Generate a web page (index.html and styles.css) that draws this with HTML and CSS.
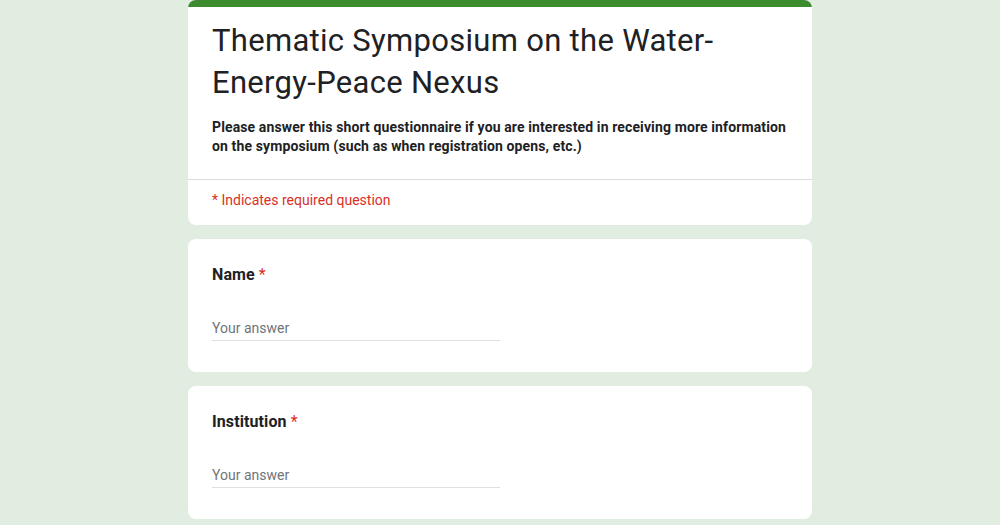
FILE: index.html
```html
<!DOCTYPE html>
<html lang="en">
<head>
<meta charset="utf-8">
<title>Thematic Symposium on the Water-Energy-Peace Nexus</title>
<link rel="stylesheet" href="styles.css">
</head>
<body>
<main class="form">
  <section class="card header-card">
    <div class="accent-bar"></div>
    <div class="header-body">
      <h1 class="form-title">Thematic Symposium on the Water-Energy-Peace Nexus</h1>
      <p class="form-desc">Please answer this short questionnaire if you are interested in receiving more information on the symposium (such as when registration opens, etc.)</p>
    </div>
    <div class="required-note">* Indicates required question</div>
  </section>

  <section class="card question">
    <div class="q-title">Name <span class="req">*</span></div>
    <div class="answer">Your answer</div>
  </section>

  <section class="card question">
    <div class="q-title">Institution <span class="req">*</span></div>
    <div class="answer">Your answer</div>
  </section>
</main>
</body>
</html>
```

FILE: styles.css
```css
html, body {
  margin: 0;
  padding: 0;
}

body {
  background: #e1ede1;
  font-family: Roboto, "Liberation Sans", Arial, sans-serif;
  color: #202124;
}

.form {
  width: 624px;
  margin: 0 auto;
  display: flex;
  flex-direction: column;
  gap: 14px;
}

.card {
  background: #ffffff;
  border-radius: 8px;
  overflow: hidden;
}

.accent-bar {
  height: 7px;
  background: #3d8b2f;
}

.header-body {
  padding: 13px 24px 23px;
  border-bottom: 1px solid #dadce0;
}

.form-title {
  margin: 0;
  font-family: Roboto, "Open Sans", sans-serif;
  font-weight: 400;
  font-size: 31px;
  line-height: 42px;
  letter-spacing: 0.3px;
  color: #202124;
}

.form-desc {
  margin: 14px 0 0;
  font-size: 14px;
  line-height: 19px;
  letter-spacing: 0.12px;
  font-weight: 700;
  color: #202124;
}

.required-note {
  padding: 11px 24px 16px;
  font-size: 14px;
  line-height: 18px;
  color: #d93025;
}

.question {
  padding: 24px 24px 31px;
}

.q-title {
  font-size: 16px;
  line-height: 24px;
  font-weight: 700;
  letter-spacing: 0.1px;
  color: #202124;
}

.req {
  color: #d93025;
  font-weight: 400;
}

.answer {
  margin-top: 31px;
  width: 288px;
  font-size: 14px;
  line-height: 20px;
  padding-bottom: 2px;
  color: #70757a;
  border-bottom: 1px solid #e0e0e0;
}
```
